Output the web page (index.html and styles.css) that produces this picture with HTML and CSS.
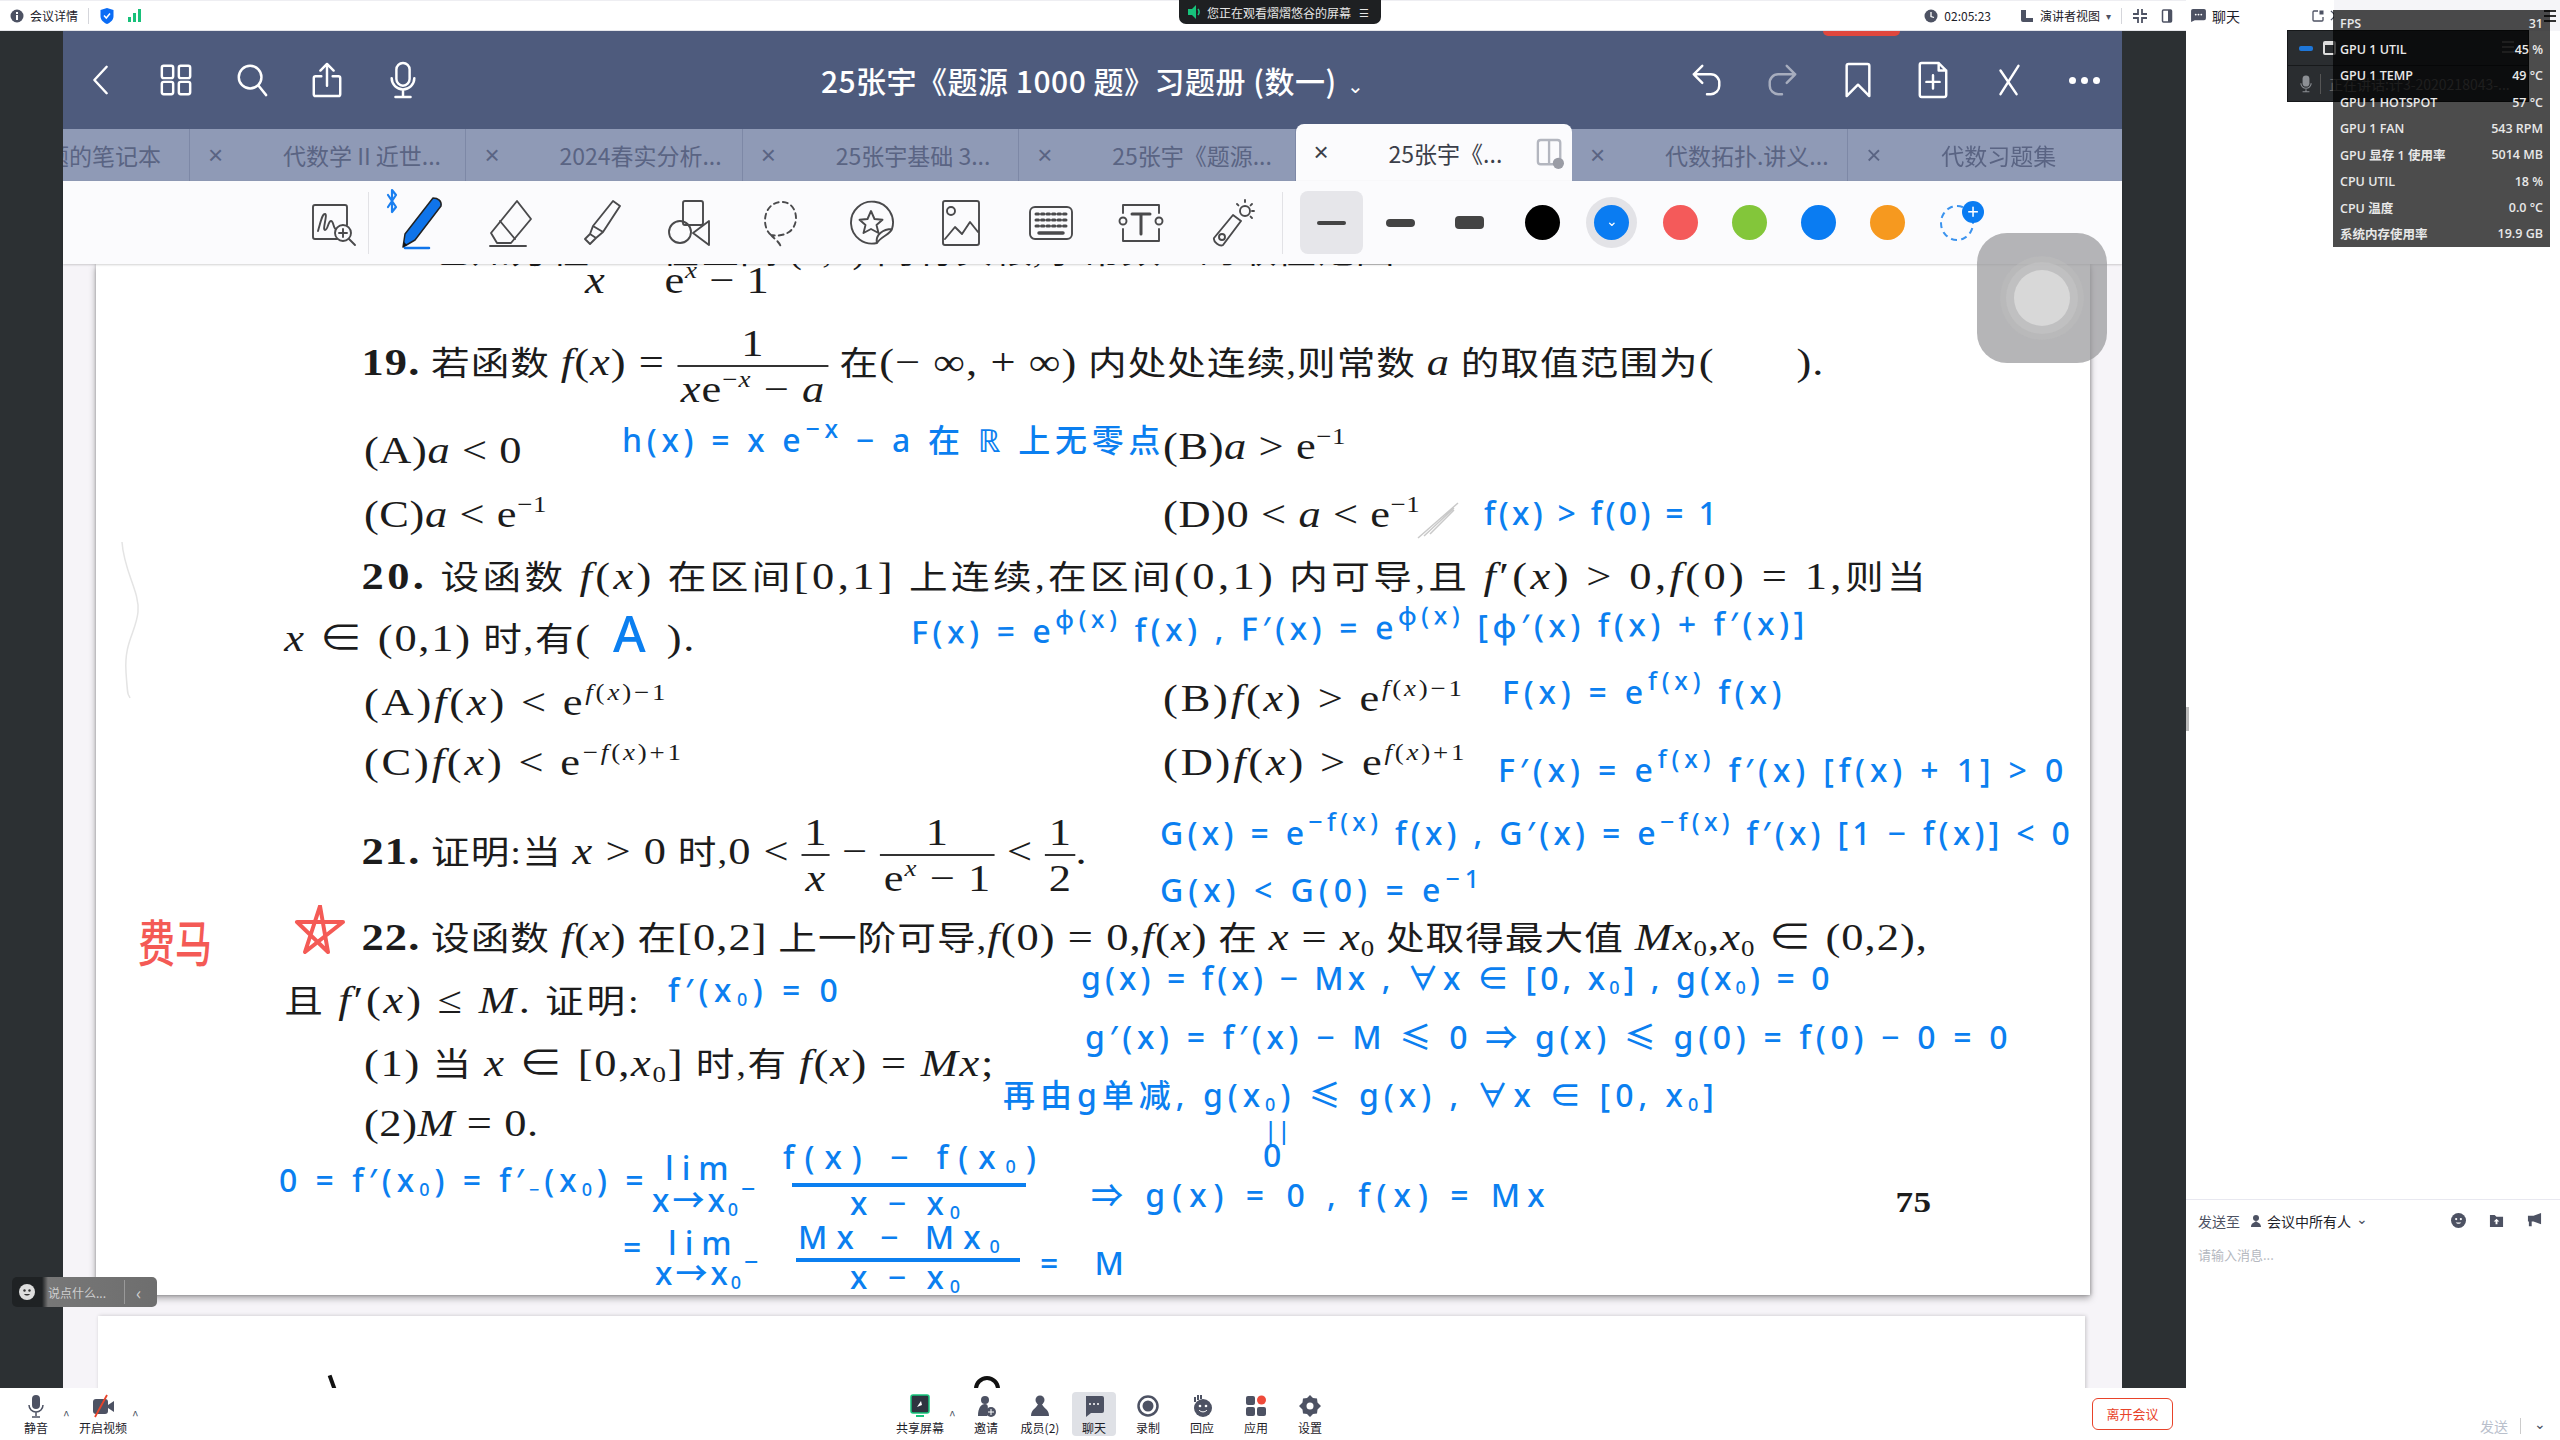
FILE: index.html
```html
<!DOCTYPE html>
<html lang="zh-CN">
<head>
    <meta charset="UTF-8">
    <title>会议详情</title>
    <link rel="stylesheet" href="styles.css">
</head>
<body>
<div class="app">
    <div class="meeting">
        <!-- meeting top strip -->
        <div class="topbar">
            <div class="topbar-group">
                <svg class="ic14" viewBox="0 0 14 14"><circle cx="7" cy="7" r="6.5" fill="#4d5263"/><rect x="6" y="6" width="2" height="5" fill="#fff"/><rect x="6" y="3" width="2" height="2" fill="#fff"/></svg>
                <span class="topbar-text">会议详情</span>
                <span class="topbar-sep"></span>
                <svg class="ic-shield" viewBox="0 0 14 16"><path d="M7 0l6.5 2v6c0 4-3 6.5-6.5 8C3.500 14.500.5 12 .5 8V2z" fill="#0a6cf5"/><path d="M4 7.500l2.300 2.500L10 5.500" stroke="#fff" stroke-width="1.500" fill="none"/></svg>
                <span class="signal"><i class="b1"></i><i class="b2"></i><i class="b3"></i></span>
            </div>
            <div class="topbar-group">
                <svg class="ic14" viewBox="0 0 14 14"><circle cx="7" cy="7" r="6.500" fill="#4d5263"/><path d="M7 3v4.500l3 1" stroke="#fff" stroke-width="1.300" fill="none"/></svg>
                <span class="topbar-text">02:05:23</span>
                <svg class="ic-layout" viewBox="0 0 14 14"><path d="M1 1h5v8h7v4H3a2 2 0 0 1-2-2z" fill="#4d5263"/></svg>
                <span class="topbar-text">演讲者视图</span>
                <span class="caret">▾</span>
                <span class="topbar-sep"></span>
                <svg class="ic14" viewBox="0 0 14 14"><path d="M5 0v5H0M9 0v5h5M5 14V9H0M9 14V9h5" stroke="#4d5263" stroke-width="1.800" fill="none"/></svg>
                <svg class="ic14" viewBox="0 0 14 14"><rect x="2.500" y="1" width="9" height="12" rx="1" fill="none" stroke="#4d5263" stroke-width="1.500"/><rect x="8" y="1" width="3.500" height="12" fill="#4d5263"/></svg>
            </div>
        </div>

        <div class="stage">
            <div class="gutter"></div>
            <div class="notes">
                <header class="nav">
                    <div class="nav-group">
                        <span class="nav-btn"><svg class="nav-ic" viewBox="0 0 36 36"><path d="M24 4L11 18l13 14"/></svg></span>
                        <span class="nav-btn"><svg class="nav-ic" viewBox="0 0 36 36"><rect x="3" y="3" width="12" height="13" rx="2"/><rect x="21" y="3" width="12" height="13" rx="2"/><rect x="3" y="20" width="12" height="13" rx="2"/><rect x="21" y="20" width="12" height="13" rx="2"/></svg></span>
                        <span class="nav-btn"><svg class="nav-ic" viewBox="0 0 36 36"><circle cx="16" cy="15" r="12"/><path d="M25 24l8 10"/></svg></span>
                        <span class="nav-btn"><svg class="nav-ic nav-tall" viewBox="0 0 36 40"><path d="M18 26V3M11 10l7-7 7 7M12 16H6a2 2 0 0 0-2 2v17a2 2 0 0 0 2 2h24a2 2 0 0 0 2-2V18a2 2 0 0 0-2-2h-6"/></svg></span>
                        <span class="nav-btn"><svg class="nav-ic nav-tall" viewBox="0 0 36 40"><rect x="11" y="2" width="14" height="24" rx="7"/><path d="M6 18a12 12 0 0 0 24 0M18 30v7M10 38h16"/></svg></span>
                    </div>
                    <div class="doc-title">25张宇《题源 1000 题》习题册 (数一)<span class="doc-caret">⌄</span></div>
                    <div class="nav-group">
                        <span class="nav-btn"><svg class="nav-ic" viewBox="0 0 36 36"><path d="M13 3L4 12l9 9M4 12h18a9 9 0 0 1 9 10v2a9 9 0 0 1-9 9h-4"/></svg></span>
                        <span class="nav-btn dim"><svg class="nav-ic" viewBox="0 0 36 36"><path d="M23 3l9 9-9 9M32 12H14a9 9 0 0 0-9 10v2a9 9 0 0 0 9 9h4"/></svg></span>
                        <span class="nav-btn"><svg class="nav-ic nav-tall" viewBox="0 0 36 40"><path d="M6 37V5a2 2 0 0 1 2-2h20a2 2 0 0 1 2 2v32L18 25z"/></svg></span>
                        <span class="nav-btn"><svg class="nav-ic nav-tall" viewBox="0 0 36 40"><path d="M24 2H6a2 2 0 0 0-2 2v32a2 2 0 0 0 2 2h24a2 2 0 0 0 2-2V10zM24 2v8h8M18 15v14M11 22h14"/></svg></span>
                        <span class="nav-btn"><svg class="nav-ic" viewBox="0 0 36 36"><path d="M28 3L9 33M9 8l17 25"/></svg></span>
                        <span class="nav-btn"><span class="dots"><i></i><i></i><i></i></span></span>
                    </div>
                </header>
                <span class="rec-tab"></span>

                <nav class="tabs">
                    <div class="tab tab-first"><span class="tab-name">题的笔记本</span></div>
                    <div class="tab"><span class="tab-x">×</span><span class="tab-name">代数学 II 近世...</span></div>
                    <div class="tab"><span class="tab-x">×</span><span class="tab-name">2024春实分析...</span></div>
                    <div class="tab"><span class="tab-x">×</span><span class="tab-name">25张宇基础 3...</span></div>
                    <div class="tab"><span class="tab-x">×</span><span class="tab-name">25张宇《题源...</span></div>
                    <div class="tab tab-active"><span class="tab-x">×</span><span class="tab-name">25张宇《...</span>
                        <svg class="split-ic" viewBox="0 0 30 34"><rect x="2" y="2" width="24" height="26" rx="3" fill="none" stroke="#b3b6bf" stroke-width="2.500"/><path d="M14 2v26" stroke="#b3b6bf" stroke-width="2.500"/><circle cx="24" cy="27" r="6" fill="#9a9ca5"/></svg>
                    </div>
                    <div class="tab"><span class="tab-x">×</span><span class="tab-name">代数拓扑.讲义...</span></div>
                    <div class="tab"><span class="tab-x">×</span><span class="tab-name">代数习题集</span></div>
                </nav>

                <div class="toolbar">
                    <span class="tool tool-zoom">
                        <svg viewBox="0 0 48 48"><path d="M38 26V8a2 2 0 0 0-2-2H6a2 2 0 0 0-2 2v30a2 2 0 0 0 2 2h22"/><path d="M9 32c3-10 4-17 7-17s-3 16 0 16 3-9 6-9 2 8 5 8"/><circle cx="34" cy="34" r="8"/><path d="M34 30v8M30 34h8M40 40l6 6"/></svg>
                    </span>
                    <span class="tool-sep first"></span>
                    <span class="tool">
                        <svg class="bt-ic" viewBox="0 0 12 26"><path d="M2 7l8 12-4 5V2l4 5-8 12" fill="none" stroke="#1a7ff0" stroke-width="2.200"/></svg>
                        <svg class="pen-ic" viewBox="0 0 48 54"><path d="M36 2c5 0 9 3 8 8L18 44 6 51l2-13z" fill="#0f74ea" stroke="#222" stroke-width="1.500"/><path d="M6 51l4-2-3-3z" fill="#111"/><path d="M8 52h24" stroke="#0f74ea" stroke-width="2.500"/></svg>
                    </span>
                    <span class="tool"><svg viewBox="0 0 48 48"><path d="M30 2l14 18-20 24H10L4 34z"/><path d="M13 22l15 18M3 47h36"/></svg></span>
                    <span class="tool"><svg viewBox="0 0 48 48"><path d="M36 2l7 5-17 26-10-6zM16 27l-3 8 6 4 7-6M13 35l-5 5 5 5 6-6"/></svg></span>
                    <span class="tool"><svg viewBox="0 0 48 48"><rect x="16" y="2" width="20" height="24" rx="2"/><circle cx="13" cy="33" r="11"/><path d="M42 22v24L26 34z"/></svg></span>
                    <span class="tool"><svg viewBox="0 0 48 48"><path d="M14 36C4 28 6 4 24 3c16-1 20 22 8 30-6 4-14 4-18 3zm0 0c2 3 8 6 10 12" stroke-dasharray="5 4"/></svg></span>
                    <span class="tool"><svg viewBox="0 0 48 48"><path d="M30 44a21 21 0 1 1 15-14c-1 5-12 8-15 14zM30 44c-2-8 6-14 15-14"/><path d="M24 12l3.500 8 8 .8-6 5.200 2 8-7.500-4-7.500 4 2-8-6-5.200 8-.8z"/></svg></span>
                    <span class="tool"><svg viewBox="0 0 48 48"><rect x="6" y="2" width="36" height="44" rx="2"/><circle cx="14" cy="12" r="4"/><path d="M8 40l10-12 7 7 8-12 8 10"/></svg></span>
                    <span class="tool"><svg viewBox="0 0 48 48"><rect x="3" y="8" width="42" height="32" rx="5"/><path d="M9 15h30M9 21h30M9 27h30" stroke-dasharray="2.500 3" stroke-width="3"/><path d="M12 34h24" stroke-width="3.500"/></svg></span>
                    <span class="tool"><svg viewBox="0 0 48 48"><path d="M6 14V6h36v8M6 30v12h36V30"/><path d="M15 15h18M24 15v20" stroke-width="3"/><circle cx="6" cy="22" r="3.500"/><circle cx="42" cy="22" r="3.500"/></svg></span>
                    <span class="tool"><svg viewBox="0 0 48 48"><path d="M26 16l8 6-18 24c-3 2-10-3-9-7z"/><circle cx="15" cy="38" r="3"/><circle cx="38" cy="12" r="5"/><path d="M38 1v3M47 12h-3M45 5l-2 2M45 19l-2-2M30 5l2 2" stroke-dasharray="2 1"/></svg></span>
                    <span class="tool-sep second"></span>
                    <span class="swatch picked"><i class="dash d1"></i></span>
                    <span class="swatch"><i class="dash d2"></i></span>
                    <span class="swatch"><i class="dash d3"></i></span>
                    <span class="swatch swatch-first"><i class="dot c-black"></i></span>
                    <span class="swatch"><i class="dot c-blue ringed">⌄</i></span>
                    <span class="swatch"><i class="dot c-red"></i></span>
                    <span class="swatch"><i class="dot c-green"></i></span>
                    <span class="swatch"><i class="dot c-blue"></i></span>
                    <span class="swatch"><i class="dot c-orange"></i></span>
                    <span class="swatch add-colour"><i class="dashed-ring"></i><i class="plus">+</i></span>
                </div>

                <div class="viewer">
                    <div class="page">
                        <div class="scan">
                            <div class="cut">
                                <span class="q-head"><b>18.</b> 已知方程</span><span class="q-tail">在区间 (0,1) 内有实根,求常数 <i>k</i> 的取值范围.</span><br>
                                <span class="cut-x m"><i>x</i></span><span class="cut-e m">e<sup><i>x</i></sup> − 1</span>
                            </div>
                            <div class="line q sp1"><b>19.</b> 若函数 <span class="m"><i>f</i>(<i>x</i>) = <span class="frac f19"><span>1</span><span><i>x</i>e<sup>−<i>x</i></sup> − <i>a</i></span></span></span> 在<span class="m">(− ∞, + ∞)</span> 内处处连续,则常数 <span class="m"><i>a</i></span> 的取值范围为<span class="m">(<span class="blank"></span>).</span></div>
                            <div class="line opts"><span class="m">(A)<i>a</i> &lt; 0</span><span class="m up">(B)<i>a</i> &gt; e<sup>−1</sup></span></div>
                            <div class="line opts"><span class="m">(C)<i>a</i> &lt; e<sup>−1</sup></span><span class="m">(D)0 &lt; <i>a</i> &lt; e<sup>−1</sup></span></div>
                            <div class="line q sp4"><b>20.</b> 设函数 <span class="m"><i>f</i>(<i>x</i>)</span> 在区间<span class="m">[0,1]</span> 上连续,在区间<span class="m">(0,1)</span> 内可导,且 <span class="m"><i>f</i>′(<i>x</i>) &gt; 0,<i>f</i>(0) = 1,</span>则当</div>
                            <div class="line cont sp2"><span class="m"><i>x</i> ∈ (0,1)</span> 时,有<span class="m">(<span class="blank wide"></span>).</span></div>
                            <div class="line opts sp3"><span class="m">(A)<i>f</i>(<i>x</i>) &lt; e<sup><i>f</i>(<i>x</i>)−1</sup></span><span class="m up">(B)<i>f</i>(<i>x</i>) &gt; e<sup><i>f</i>(<i>x</i>)−1</sup></span></div>
                            <div class="line opts sp3"><span class="m">(C)<i>f</i>(<i>x</i>) &lt; e<sup>−<i>f</i>(<i>x</i>)+1</sup></span><span class="m">(D)<i>f</i>(<i>x</i>) &gt; e<sup><i>f</i>(<i>x</i>)+1</sup></span></div>
                            <div class="line q sp1"><b>21.</b> 证明:当 <span class="m"><i>x</i> &gt; 0</span> 时,<span class="m">0 &lt; <span class="frac"><span>1</span><span><i>x</i></span></span> − <span class="frac"><span>1</span><span>e<sup><i>x</i></sup> − 1</span></span> &lt; <span class="frac"><span>1</span><span>2</span></span>.</span></div>
                            <div class="line q sp1"><b>22.</b> 设函数 <span class="m"><i>f</i>(<i>x</i>)</span> 在<span class="m">[0,2]</span> 上一阶可导,<span class="m"><i>f</i>(0) = 0,<i>f</i>(<i>x</i>)</span> 在 <span class="m"><i>x</i> = <i>x</i><sub>0</sub></span> 处取得最大值 <span class="m"><i>Mx</i><sub>0</sub>,<i>x</i><sub>0</sub> ∈ (0,2),</span></div>
                            <div class="line cont sp3">且 <span class="m"><i>f</i>′(<i>x</i>) ≤ <i>M</i>.</span> 证明:</div>
                            <div class="line opt-one sp2"><span class="m">(1)</span> 当 <span class="m"><i>x</i> ∈ [0,<i>x</i><sub>0</sub>]</span> 时,有 <span class="m"><i>f</i>(<i>x</i>) = <i>Mx</i>;</span></div>
                            <div class="line opt-one m">(2)<i>M</i> = 0.</div>
                            <div class="line page-no">75</div>
                        </div>

                        <!-- handwriting on top of the scan -->
                        <span class="ink n1">h(x) = x e<sup>−x</sup> − a 在 ℝ 上无零点</span>
                        <span class="ink n2">f(x) &gt; f(0) = 1</span>
                        <span class="ink n3">A</span>
                        <span class="ink n4">F(x) = e<sup>φ(x)</sup> f(x) , F′(x) = e<sup>φ(x)</sup> [φ′(x) f(x) + f′(x)]</span>
                        <span class="ink n5">F(x) = e<sup>f(x)</sup> f(x)</span>
                        <span class="ink n6">F′(x) = e<sup>f(x)</sup> f′(x) [f(x) + 1] &gt; 0</span>
                        <span class="ink n7">G(x) = e<sup>−f(x)</sup> f(x) , G′(x) = e<sup>−f(x)</sup> f′(x) [1 − f(x)] &lt; 0</span>
                        <span class="ink n8">G(x) &lt; G(0) = e<sup>−1</sup></span>
                        <span class="ink n9">f′(x<sub>0</sub>) = 0</span>
                        <span class="ink n10">g(x) = f(x) − Mx , ∀x ∈ [0, x<sub>0</sub>] , g(x<sub>0</sub>) = 0</span>
                        <span class="ink n11">g′(x) = f′(x) − M ≤ 0 ⇒ g(x) ≤ g(0) = f(0) − 0 = 0</span>
                        <span class="ink n12">再由g单减, g(x<sub>0</sub>) ≤ g(x) , ∀x ∈ [0, x<sub>0</sub>]</span>
                        <span class="ink n13">||</span>
                        <span class="ink n13b">0</span>
                        <span class="ink n14">0 = f′(x<sub>0</sub>) = f′<sub>−</sub>(x<sub>0</sub>) =</span>
                        <span class="ink lim1">lim</span>
                        <span class="ink arr1">x→x<sub>0</sub><sup>−</sup></span>
                        <span class="ink num1">f(x) − f(x<sub>0</sub>)</span>
                        <span class="ink-bar bar1"></span>
                        <span class="ink den1">x − x<sub>0</sub></span>
                        <span class="ink eq2">=</span>
                        <span class="ink lim2">lim</span>
                        <span class="ink arr2">x→x<sub>0</sub><sup>−</sup></span>
                        <span class="ink num2">Mx − Mx<sub>0</sub></span>
                        <span class="ink-bar bar2"></span>
                        <span class="ink den2">x − x<sub>0</sub></span>
                        <span class="ink eqm">= M</span>
                        <span class="ink n16">⇒ g(x) = 0 , f(x) = Mx</span>
                        <span class="ink ink-red">费马</span>
                        <svg class="star" viewBox="0 0 54 50"><path d="M27 1l8 46L4 17h46L12 47z"/></svg>
                        <svg class="smudge s1" viewBox="0 0 44 40"><path d="M2 38L42 3M8 36L38 8M14 34l24-24"/></svg>
                        <svg class="smudge s2" viewBox="0 0 30 160"><path d="M8 2c2 30 18 50 16 70s-14 30-12 60 2 20 4 26"/></svg>
                    </div>
                    <div class="next-page">
                        <span class="next-mark m1"></span>
                        <span class="next-mark m2"></span>
                    </div>
                </div>
            </div>
            <div class="gutter right"></div>

            <div class="floater"><i></i></div>
            <div class="say-bar">
                <svg class="say-face" viewBox="0 0 16 16"><circle cx="8" cy="8" r="8" fill="#ddd"/><circle cx="5.500" cy="6.500" r="1.200" fill="#333"/><circle cx="10.500" cy="6.500" r="1.200" fill="#333"/><path d="M5 10c1.500 2 4.500 2 6 0" fill="#333"/></svg>
                <span class="say-text">说点什么...</span>
                <span class="say-chev">‹</span>
            </div>
        </div>

        <div class="bottombar">
            <div class="bb-group">
                <span class="bb-item">
                    <svg class="bb-ic" viewBox="0 0 24 24"><rect x="8" y="1" width="8" height="14" rx="4" fill="#4d5263"/><path d="M5 11a7 7 0 0 0 14 0M12 18v4M8 23h8" stroke="#4d5263" stroke-width="1.500" fill="none"/></svg>
                    <span>静音</span>
                </span>
                <span class="bb-up">^</span>
                <span class="bb-item wide">
                    <svg class="bb-ic" viewBox="0 0 24 24"><rect x="2" y="5" width="15" height="15" rx="3" fill="#4d5263"/><path d="M17 11l6-4v11l-6-4z" fill="#4d5263"/><path d="M16 1L4 23" stroke="#e8432a" stroke-width="1.800"/></svg>
                    <span>开启视频</span>
                </span>
                <span class="bb-up">^</span>
            </div>
            <div class="bb-group centre">
                <span class="bb-item wide">
                    <svg class="bb-ic" viewBox="0 0 24 24"><rect x="3" y="1" width="18" height="18" rx="2" fill="#2f3440" stroke="#17c37b" stroke-width="1.500"/><path d="M9 13l4-6 1 4z" fill="#fff"/><rect x="8" y="21" width="8" height="2" fill="#17c37b"/></svg>
                    <span>共享屏幕</span>
                </span>
                <span class="bb-up">^</span>
                <span class="bb-item"><svg class="bb-ic" viewBox="0 0 24 24"><circle cx="11" cy="6" r="4" fill="#4d5263"/><path d="M4 22c0-8 3-12 7-12s3 4 2 12z" fill="#4d5263"/><circle cx="17" cy="18" r="5" fill="#4d5263"/><path d="M17 15v6M14 18h6" stroke="#fff"/></svg><span>邀请</span></span>
                <span class="bb-item"><svg class="bb-ic" viewBox="0 0 24 24"><circle cx="12" cy="6" r="4.500" fill="#4d5263"/><path d="M3 22c0-7 5-7 7-12h4c2 5 7 5 7 12z" fill="#4d5263"/></svg><span>成员(2)</span></span>
                <span class="bb-item on"><svg class="bb-ic" viewBox="0 0 24 24"><path d="M4 2h16a2 2 0 0 1 2 2v13a2 2 0 0 1-2 2H9l-5 4z" fill="#4d5263"/><circle cx="8" cy="10" r="1" fill="#fff"/><circle cx="12" cy="10" r="1" fill="#fff"/><circle cx="16" cy="10" r="1" fill="#fff"/></svg><span>聊天</span></span>
                <span class="bb-item"><svg class="bb-ic" viewBox="0 0 24 24"><circle cx="12" cy="12" r="9.500" fill="none" stroke="#4d5263" stroke-width="2.500"/><circle cx="12" cy="12" r="5.500" fill="#4d5263"/></svg><span>录制</span></span>
                <span class="bb-item"><svg class="bb-ic" viewBox="0 0 24 24"><circle cx="13" cy="14" r="9" fill="#4d5263"/><circle cx="10" cy="12" r="1.300" fill="#fff"/><circle cx="16" cy="12" r="1.300" fill="#fff"/><path d="M9 16c2 2.500 6 2.500 8 0" stroke="#fff" fill="none"/><path d="M5 8V3M8 6V1M11 5V1" stroke="#4d5263" stroke-width="2"/></svg><span>回应</span></span>
                <span class="bb-item"><svg class="bb-ic" viewBox="0 0 24 24"><rect x="2" y="2" width="9" height="9" rx="2" fill="#4d5263"/><rect x="2" y="13" width="9" height="9" rx="2" fill="#4d5263"/><rect x="13" y="13" width="9" height="9" rx="2" fill="#4d5263"/><circle cx="17.500" cy="6" r="4.500" fill="#ef4a3a"/></svg><span>应用</span></span>
                <span class="bb-item"><svg class="bb-ic" viewBox="0 0 24 24"><path d="M12 1l3 3 4 .5.500 4L23 12l-3.500 3.500-.5 4-4 .5-3 3-3-3-4-.5-.5-4L1 12l3.500-3.500.5-4L9 4z" fill="#4d5263"/><circle cx="12" cy="12" r="3.500" fill="#fff"/></svg><span>设置</span></span>
            </div>
            <span class="leave">离开会议</span>
        </div>
    </div>

    <aside class="chat">
        <div class="chat-head">
            <div class="chat-title">
                <svg class="ic-chat" viewBox="0 0 16 14"><path d="M2 0h12a2 2 0 0 1 2 2v8a2 2 0 0 1-2 2H4l-4 2V2a2 2 0 0 1 2-2z" fill="#4d5263"/><circle cx="5" cy="6" r="1" fill="#fff"/><circle cx="8" cy="6" r="1" fill="#fff"/><circle cx="11" cy="6" r="1" fill="#fff"/></svg>
                <span class="chat-name">聊天</span>
                <svg class="ic-pop" viewBox="0 0 12 12"><path d="M6 1H2a1 1 0 0 0-1 1v8a1 1 0 0 0 1 1h8a1 1 0 0 0 1-1V7" fill="none" stroke="#4d5263" stroke-width="1.300"/><rect x="7.500" y="0.500" width="4" height="4" fill="#4d5263"/></svg>
                <svg class="ic-close" viewBox="0 0 12 12"><path d="M1 1l10 10M11 1L1 11" stroke="#4d5263" stroke-width="1.400"/></svg>
            </div>
            <div class="chat-strip"><span class="burger"><i></i><i></i><i></i></span></div>
        </div>
        <div class="chat-list"><span class="resize-grip"></span></div>
        <div class="chat-foot">
            <div class="send-to">
                <span class="muted">发送至</span>
                <svg class="ic-person" viewBox="0 0 12 14"><circle cx="6" cy="4" r="3" fill="#4d5263"/><path d="M1 13c0-4 3-4 5-6 2 2 5 2 5 6z" fill="#4d5263"/></svg>
                <span>会议中所有人</span>
                <span class="chev-down">⌄</span>
                <span class="send-icons">
                    <svg viewBox="0 0 16 16"><circle cx="8" cy="8" r="8" fill="#4d5263"/><circle cx="5.500" cy="6.500" r="1.200" fill="#fff"/><circle cx="10.500" cy="6.500" r="1.200" fill="#fff"/><path d="M5 10c1.500 2 4.500 2 6 0" fill="#fff"/></svg>
                    <svg viewBox="0 0 16 16"><path d="M1 2h5l2 2h7v11H1z" fill="#4d5263"/><path d="M8 6l3 3H9v3H7V9H5z" fill="#fff"/></svg>
                    <svg viewBox="0 0 16 16"><path d="M15 0v12L7 9H5v5H2V9H1V3h6z" fill="#4d5263"/></svg>
                </span>
            </div>
            <div class="chat-input">请输入消息...</div>
            <div class="send-row"><span class="send">发送</span><i></i><span class="chev-down">⌄</span></div>
        </div>
    </aside>

    <div class="pill">
        <svg class="pill-ic" viewBox="0 0 12 14"><path d="M0 4h4l4-4v14l-4-4H0z" fill="#17c37b"/><path d="M10 4c1.500 2 1.500 4 0 6" stroke="#17c37b" stroke-width="1.500" fill="none"/></svg>
        <span>您正在观看熠熠悠谷的屏幕</span>
        <span class="pill-menu">☰</span>
    </div>

    <div class="voice">
        <div class="voice-row">
            <i class="v-min"></i><i class="v-max"></i><span class="burger v-burger"><i></i><i></i><i></i></span>
        </div>
        <div class="voice-row">
            <svg class="v-mic" viewBox="0 0 14 20"><rect x="3" y="0" width="8" height="13" rx="4" fill="#8c8f94"/><path d="M1 9a6 6 0 0 0 12 0M7 16v3M3 19h8" stroke="#8c8f94" stroke-width="1.300" fill="none"/></svg>
            <i class="v-sep"></i>
            <span class="v-text">正在讲话:计3-2020218043-...</span>
        </div>
    </div>

    <div class="hud">
        <div class="hud-row"><span>FPS</span><span>31</span></div>
        <div class="hud-row"><span>GPU 1 UTIL</span><span>45 %</span></div>
        <div class="hud-row"><span>GPU 1 TEMP</span><span>49 °C</span></div>
        <div class="hud-row"><span>GPU 1 HOTSPOT</span><span>57 °C</span></div>
        <div class="hud-row"><span>GPU 1 FAN</span><span>543 RPM</span></div>
        <div class="hud-row"><span>GPU 显存 1 使用率</span><span>5014 MB</span></div>
        <div class="hud-row"><span>CPU UTIL</span><span>18 %</span></div>
        <div class="hud-row"><span>CPU 温度</span><span>0.0 °C</span></div>
        <div class="hud-row"><span>系统内存使用率</span><span>19.9 GB</span></div>
    </div>
</div>
</body>
</html>
```
FILE: styles.css
```css
* {
    box-sizing: border-box;
}
body {
    margin: 0;
    background: #fff;
    font-family: "Noto Sans CJK SC", "Liberation Sans", sans-serif;
}
.app {
    position: relative;
    width: 2560px;
    height: 1440px;
    overflow: hidden;
    display: grid;
    grid-template-columns: 2186px 374px;
    grid-template-rows: 1440px;
}
.meeting {
    display: flex;
    flex-direction: column;
    min-width: 0;
    min-height: 0;
}

/* top strip */
.topbar {
    height: 31px;
    flex: none;
    display: flex;
    justify-content: space-between;
    align-items: center;
    padding: 0 12px 0 10px;
    background: #fff;
    border-top: 1px solid #eeeef2;
    border-bottom: 1px solid #e4e5ea;
}
.topbar-group {
    display: flex;
    align-items: center;
    gap: 6px;
}
.topbar-text {
    font-size: 12px;
    color: #1d2129;
}
.topbar-sep {
    width: 1px;
    height: 16px;
    margin: 0 5px 0 4px;
    background: #d5d6db;
}
.ic14 {
    width: 14px;
    height: 14px;
}
.ic14 + .ic14 {
    margin-left: 7px;
}
.ic-shield {
    width: 14px;
    height: 16px;
}
.ic-layout {
    width: 14px;
    height: 14px;
    margin-left: 23px;
}
.signal {
    display: flex;
    align-items: flex-end;
    gap: 2px;
    height: 13px;
    margin-left: 8px;
}
.signal i {
    width: 3px;
    background: #18c07a;
}
.signal .b1 { height: 5px; }
.signal .b2 { height: 9px; }
.signal .b3 { height: 13px; }
.caret {
    font-size: 10px;
    color: #4d5263;
}

/* meeting video area */
.stage {
    position: relative;
    flex: 1;
    display: flex;
    min-height: 0;
    background: #2c3033;
}
.gutter {
    width: 63px;
    flex: none;
}
.gutter.right {
    width: 64px;
}
.notes {
    position: relative;
    flex: 1;
    display: flex;
    flex-direction: column;
    min-width: 0;
    filter: blur(0.4px);
}
.nav {
    height: 98px;
    flex: none;
    display: grid;
    grid-template-columns: 1fr auto 1fr;
    align-items: center;
    background: #4e5b7d;
    color: #fff;
}
.nav-group {
    display: flex;
    align-items: center;
}
.nav-group:last-child {
    justify-content: flex-end;
}
.nav-btn {
    width: 75.5px;
    display: flex;
    justify-content: center;
}
.nav-btn.dim {
    opacity: 0.5;
}
.nav-ic {
    width: 34px;
    height: 34px;
    fill: none;
    stroke: #fff;
    stroke-width: 2.6;
    stroke-linecap: round;
    stroke-linejoin: round;
}
.nav-tall {
    height: 38px;
}
.dots {
    display: flex;
    gap: 5px;
}
.dots i {
    width: 7px;
    height: 7px;
    border-radius: 50%;
    background: #fff;
}
.doc-title {
    font-size: 30px;
    font-weight: 500;
    letter-spacing: 0.5px;
    white-space: nowrap;
}
.doc-caret {
    margin-left: 10px;
    font-size: 20px;
}
.rec-tab {
    position: absolute;
    left: 1760px;
    top: 0;
    width: 77px;
    height: 5px;
    border-radius: 0 0 6px 6px;
    background: #e0473e;
}

/* tabs */
.tabs {
    position: relative;
    height: 52px;
    flex: none;
    display: flex;
    background: #8f9ab6;
    font-size: 23px;
    color: #5a6483;
}
.tab {
    position: relative;
    width: 276.4px;
    flex: none;
    display: flex;
    align-items: center;
    border-right: 1px solid #7d88a6;
    white-space: nowrap;
}
.tab:last-child {
    border-right: 0;
}
.tab-first {
    width: 127px;
    justify-content: flex-end;
    overflow: hidden;
}
.tab-first .tab-name {
    margin: 0 28px 0 0;
}
.tab-x {
    width: 93px;
    padding-left: 18px;
    font-family: "Liberation Sans", sans-serif;
    font-size: 26px;
    font-weight: 300;
}
.tab-active {
    margin-top: -5px;
    height: 57px;
    border-right: 0;
    border-radius: 8px 8px 0 0;
    background: #fbfbfd;
    color: #3b3f4a;
}
.split-ic {
    position: absolute;
    right: 8px;
    top: 14px;
    width: 28px;
    height: 32px;
}

/* drawing tools */
.toolbar {
    height: 83px;
    flex: none;
    display: flex;
    align-items: center;
    padding-left: 240px;
    background: #fbfbfd;
    box-shadow: 0 1px 2px rgba(0, 0, 0, 0.18);
    position: relative;
    z-index: 1;
}
.tool {
    position: relative;
    width: 90px;
    height: 54px;
    flex: none;
    display: flex;
    justify-content: center;
    align-items: center;
}
.tool-zoom {
    width: 60px;
}
.tool svg {
    width: 48px;
    height: 48px;
    fill: none;
    stroke: #4a4a4c;
    stroke-width: 1.9;
    stroke-linejoin: round;
    stroke-linecap: round;
}
.tool .bt-ic {
    position: absolute;
    left: 10px;
    top: -8px;
    width: 12px;
    height: 26px;
}
.tool .pen-ic {
    height: 54px;
    stroke: none;
}
.tool-sep {
    width: 1px;
    height: 62px;
    flex: none;
    background: #e2e2e6;
}
.tool-sep.first {
    margin: 0 7px 0 5px;
}
.tool-sep.second {
    margin: 0 14px 0 6px;
}
.swatch {
    position: relative;
    width: 69px;
    height: 63px;
    flex: none;
    display: flex;
    justify-content: center;
    align-items: center;
}
.swatch-first {
    margin-left: 4px;
}
.swatch.picked::before {
    content: "";
    position: absolute;
    left: 3px;
    right: 3px;
    top: 0;
    bottom: 0;
    border-radius: 8px;
    background: #e6e6ea;
}
.dash {
    position: relative;
    width: 29px;
    background: #444;
    border-radius: 4px;
}
.d1 { height: 4px; }
.d2 { height: 8px; }
.d3 { height: 13px; }
.dot {
    width: 35px;
    height: 35px;
    border-radius: 50%;
    display: flex;
    align-items: center;
    justify-content: center;
    font-style: normal;
    color: #fff;
    font-size: 14px;
    line-height: 1;
}
.c-black { background: #000; }
.c-blue { background: #0a7cf2; }
.c-red { background: #f45a5a; }
.c-green { background: #83c63a; }
.c-orange { background: #f6991f; }
.ringed {
    box-shadow: 0 0 0 8px #e3e3e7;
    padding-bottom: 6px;
}
.dashed-ring {
    width: 34px;
    height: 36px;
    border-radius: 50%;
    border: 2px dashed #3b93ee;
}
.plus {
    position: absolute;
    left: 40px;
    top: 10px;
    width: 22px;
    height: 22px;
    border-radius: 50%;
    background: #0a7cf2;
    color: #fff;
    font-style: normal;
    font-size: 20px;
    line-height: 20px;
    text-align: center;
}

/* pdf pages */
.viewer {
    position: relative;
    flex: 1;
    min-height: 0;
    overflow: hidden;
    background: #f6f4f8;
    padding: 0 32px 0 33px;
}
.page {
    position: relative;
    height: 1031px;
    overflow: hidden;
    background: #fff;
    box-shadow: 0 3px 7px rgba(0, 0, 0, 0.35), 1px 0 3px rgba(0, 0, 0, 0.2), -1px 0 2px rgba(0, 0, 0, 0.08);
}
.next-page {
    position: relative;
    height: 200px;
    margin: 21px 5px 0 2px;
    background: #fff;
    box-shadow: 1px 0 4px rgba(0, 0, 0, 0.2);
}
.next-mark {
    position: absolute;
    background: #111;
}
.next-mark.m1 {
    left: 232px;
    top: 59px;
    width: 4px;
    height: 14px;
    transform: rotate(-20deg);
}
.next-mark.m2 {
    left: 876px;
    top: 60px;
    width: 26px;
    height: 26px;
    border-radius: 50%;
    background: none;
    border: 4px solid #111;
}

/* the scan is wider than tall on the shared screen */
.scan {
    width: 1704px;
    transform: scaleX(1.17);
    transform-origin: 0 0;
    display: grid;
    grid-template-rows: 67px 62px 88px 64px 62px 62px 64px 60px 89px 86px 63px 63px 60px 79px;
    color: #1c1c1c;
    font-family: "Liberation Serif", "Noto Sans CJK SC", serif;
    font-size: 33px;
    letter-spacing: 0.5px;
}
.m {
    font-size: 38px;
}
.scan b {
    font-size: 38px;
}
.sp1 { letter-spacing: 0.9px; }
.sp2 { letter-spacing: 1.5px; }
.sp3 { letter-spacing: 2.4px; }
.sp4 { letter-spacing: 2.9px; }
.line {
    height: 62px;
    line-height: 62px;
    align-self: end;
    white-space: nowrap;
}
.scan sup {
    font-size: 23px;
    line-height: 0;
    vertical-align: 15px;
}
.scan sub {
    font-size: 23px;
    line-height: 0;
    vertical-align: -6px;
}
.q {
    padding-left: 227px;
}
.cont {
    padding-left: 161px;
}
.opt-one {
    padding-left: 229px;
}
.opts {
    padding-left: 229px;
    display: grid;
    grid-template-columns: 683px 1fr;
}
.up {
    transform: translateY(-4px);
}
.blank {
    display: inline-block;
    width: 70px;
}
.blank.wide {
    width: 64px;
}
.frac {
    display: inline-flex;
    flex-direction: column;
    align-items: center;
    vertical-align: middle;
    line-height: 44px;
    margin: -20px 0;
}
.frac > span:first-child {
    align-self: stretch;
    text-align: center;
    border-bottom: 2px solid #333;
}
.frac > span + span {
    padding: 0 3px;
}
.cut {
    margin-top: -28px;
    line-height: 28px;
    white-space: nowrap;
    padding-left: 230px;
}
.q-head {
    display: inline-block;
    width: 253px;
}
.q-tail {
    display: inline-block;
}
.cut-x {
    display: inline-block;
    margin-left: 188px;
    width: 68px;
}
.page-no {
    padding-left: 1538px;
    font-size: 30px;
    font-weight: bold;
}

/* handwriting */
.ink {
    position: absolute;
    line-height: 40px;
    white-space: pre;
    font-family: "Noto Sans", "Noto Sans CJK SC", sans-serif;
    font-size: 32px;
    font-weight: 500;
    color: #0b7ff0;
}
.ink sup {
    font-size: 25px;
    line-height: 0;
    vertical-align: 14px;
}
.ink sub {
    font-size: 18px;
    line-height: 0;
    vertical-align: -4px;
}
.ink-bar {
    position: absolute;
    height: 4px;
    background: #0b7ff0;
}
.n1 { left: 526px; top: 156px; letter-spacing: 4.7px; }
.n2 { left: 1388px; top: 229px; letter-spacing: 3.3px; }
.n3 { left: 517px; top: 349px; font-size: 50px; }
.n4 { left: 815px; top: 348px; letter-spacing: 4.6px; transform: rotate(-0.6deg); transform-origin: 0 50%; }
.n5 { left: 1406px; top: 408px; letter-spacing: 4.8px; }
.n6 { left: 1402px; top: 486px; letter-spacing: 4.9px; }
.n7 { left: 1064px; top: 549px; letter-spacing: 4.3px; }
.n8 { left: 1064px; top: 606px; letter-spacing: 5px; }
.n9 { left: 572px; top: 706px; letter-spacing: 5.5px; }
.n10 { left: 985px; top: 694px; letter-spacing: 4.1px; }
.n11 { left: 989px; top: 753px; letter-spacing: 4.7px; }
.n12 { left: 907px; top: 811px; letter-spacing: 5px; }
.n13 { left: 1168px; top: 846px; font-size: 24px; }
.n13b { left: 1167px; top: 871px; }
.n14 { left: 183px; top: 896px; letter-spacing: 5px; }
.lim1 { left: 569px; top: 884px; letter-spacing: 8px; }
.arr1 { left: 556px; top: 916px; letter-spacing: 3px; }
.num1 { left: 687px; top: 873px; letter-spacing: 10px; }
.bar1 { left: 696px; top: 919px; width: 234px; }
.den1 { left: 754px; top: 919px; letter-spacing: 6px; }
.eq2 { left: 527px; top: 963px; }
.lim2 { left: 572px; top: 959px; letter-spacing: 8px; }
.arr2 { left: 559px; top: 989px; letter-spacing: 3px; }
.num2 { left: 702px; top: 953px; letter-spacing: 9px; }
.bar2 { left: 700px; top: 994px; width: 224px; }
.den2 { left: 754px; top: 993px; letter-spacing: 6px; }
.eqm { left: 944px; top: 979px; letter-spacing: 14px; }
.n16 { left: 995px; top: 911px; letter-spacing: 7px; }
.ink-red {
    left: 42px;
    top: 659px;
    font-size: 37px;
    color: #f45a55;
    transform: scaleY(1.35);
}
.star {
    position: absolute;
    left: 197px;
    top: 641px;
    width: 54px;
    height: 50px;
    fill: none;
    stroke: #f45a55;
    stroke-width: 4;
    stroke-linejoin: round;
}
.smudge {
    position: absolute;
    fill: none;
    stroke: #c9c9c9;
    stroke-width: 1.5;
}
.smudge.s1 {
    left: 1320px;
    top: 236px;
    width: 44px;
    height: 40px;
}
.smudge.s2 {
    left: 18px;
    top: 276px;
    width: 30px;
    height: 160px;
    stroke: #e4e4e4;
}

/* things that float over the shared screen */
.floater {
    position: absolute;
    left: 1977px;
    top: 202px;
    width: 130px;
    height: 130px;
    border-radius: 30px;
    background: rgba(150, 150, 152, 0.7);
    display: flex;
    align-items: center;
    justify-content: center;
}
.floater i {
    width: 56px;
    height: 56px;
    border-radius: 50%;
    background: #d8d8d8;
    box-shadow: 0 0 0 8px rgba(200, 200, 200, 0.5), 0 0 0 14px rgba(190, 190, 190, 0.4);
}
.say-bar {
    position: absolute;
    left: 12px;
    top: 1246px;
    width: 145px;
    height: 30px;
    display: flex;
    align-items: center;
    border-radius: 5px;
    background: linear-gradient(90deg, #1f2224 0, #1f2224 30px, #777 36px, #6e6e6e 100%);
    color: #cfcfcf;
    font-size: 12px;
}
.say-face {
    width: 16px;
    height: 16px;
    margin: 0 13px 0 7px;
}
.say-text {
    width: 76px;
    white-space: nowrap;
}
.say-chev {
    border-left: 1px solid #999;
    padding-left: 11px;
    font-size: 18px;
    line-height: 24px;
}

/* bottom toolbar */
.bottombar {
    height: 52px;
    flex: none;
    display: flex;
    align-items: center;
    background: #fff;
    padding: 0 13px 0 9px;
    position: relative;
    z-index: 2;
}
.bb-group {
    display: flex;
    align-items: center;
}
.bb-group.centre {
    position: absolute;
    left: 888px;
    top: 0;
    height: 52px;
}
.bb-item {
    width: 44px;
    height: 44px;
    margin: 0 5px;
    flex: none;
    display: flex;
    flex-direction: column;
    align-items: center;
    justify-content: space-between;
    border-radius: 4px;
    font-size: 12px;
    line-height: 16px;
    color: #1d2129;
    white-space: nowrap;
}
.bb-item.wide {
    width: 48px;
    margin: 0 5px 0 6px;
}
.bb-group.centre .bb-item.wide {
    margin-left: 8px;
}
.bb-item.on {
    background: #dfe1e6;
}
.bb-ic {
    width: 24px;
    height: 24px;
    margin-top: 2px;
}
.bb-up {
    width: 10px;
    font-size: 12px;
    color: #4d5263;
}
.leave {
    margin-left: auto;
    width: 81px;
    height: 32px;
    line-height: 30px;
    text-align: center;
    border: 1px solid #e8432a;
    border-radius: 6px;
    font-size: 13px;
    color: #e8432a;
}

/* chat side panel */
.chat {
    position: relative;
    display: flex;
    flex-direction: column;
    min-height: 0;
    background: #fff;
    color: #1d2129;
    font-size: 14px;
}
.chat-head {
    height: 31px;
    flex: none;
    display: flex;
}
.chat-title {
    width: 148px;
    flex: none;
    display: flex;
    align-items: center;
    padding-left: 5px;
    gap: 6px;
    white-space: nowrap;
}
.chat-name {
    width: 28px;
    flex: none;
}
.ic-chat {
    width: 15px;
    height: 13px;
    flex: none;
}
.ic-pop {
    width: 12px;
    height: 12px;
    margin-left: 66px;
    flex: none;
}
.ic-close {
    width: 11px;
    height: 11px;
    flex: none;
}
.chat-strip {
    flex: 1;
    display: flex;
    justify-content: flex-end;
    align-items: center;
    padding-right: 4px;
    background: #f5f5f8;
}
.burger {
    display: flex;
    flex-direction: column;
    gap: 3px;
    width: 12px;
}
.burger i {
    height: 2px;
    background: #333;
}
.chat-list {
    position: relative;
    flex: 1;
    border-bottom: 1px solid #e8e8f0;
}
.resize-grip {
    position: absolute;
    left: 0;
    top: 676px;
    width: 3px;
    height: 24px;
    background: #bbb;
}
.chat-foot {
    height: 240px;
    flex: none;
    position: relative;
    padding: 0 12px;
}
.send-to {
    height: 41px;
    display: flex;
    align-items: center;
    font-size: 14px;
    white-space: nowrap;
}
.muted {
    color: #4d5263;
}
.ic-person {
    width: 12px;
    height: 14px;
    margin: 0 5px 0 10px;
}
.chev-down {
    margin: -6px 0 0 5px;
    color: #4d5263;
    font-size: 14px;
}
.send-icons {
    display: flex;
    gap: 23px;
    margin-left: 83px;
}
.send-icons svg {
    width: 15px;
    height: 15px;
}
.chat-input {
    margin-top: 4px;
    font-size: 13px;
    color: #b5b8c0;
}
.send-row {
    position: absolute;
    right: 14px;
    bottom: 4px;
    display: flex;
    align-items: center;
    color: #b9c0cc;
    font-size: 14px;
}
.send-row i {
    width: 1px;
    height: 16px;
    margin: 0 8px 0 12px;
    background: #ccc;
}

/* screen-share pill */
.pill {
    position: absolute;
    left: 1179px;
    top: 0;
    width: 202px;
    height: 24px;
    display: flex;
    align-items: center;
    padding-left: 9px;
    gap: 7px;
    border-radius: 0 0 7px 7px;
    background: #1e2022;
    color: #e6e6e6;
    font-size: 12px;
    white-space: nowrap;
}
.pill-ic {
    width: 12px;
    height: 14px;
}
.pill-menu {
    margin-left: 1px;
    font-size: 11px;
}

/* voice window and hardware overlay */
.voice {
    position: absolute;
    left: 2287px;
    top: 30px;
    width: 242px;
    height: 72px;
    background: #2a2d30;
    border: 1px solid #16181a;
}
.voice-row {
    position: relative;
    height: 35px;
    display: flex;
    align-items: center;
}
.voice-row:first-child {
    border-bottom: 1px solid #17191b;
}
.v-min {
    width: 14px;
    height: 5px;
    margin-left: 11px;
    border-radius: 2px;
    background: #1e76d8;
}
.v-max {
    width: 13px;
    height: 14px;
    margin-left: 10px;
    border: 2px solid #ddd;
    border-top-width: 4px;
    border-radius: 2px;
}
.v-burger {
    position: absolute;
    right: 14px;
    top: 10px;
}
.v-burger i {
    background: #666;
}
.v-mic {
    width: 12px;
    height: 18px;
    margin-left: 12px;
}
.v-sep {
    width: 1px;
    height: 20px;
    margin: 0 8px;
    background: #555;
}
.v-text {
    font-size: 14px;
    color: #666;
    white-space: nowrap;
}
.hud {
    position: absolute;
    left: 2333px;
    top: 10px;
    width: 217px;
    height: 237px;
    background: rgba(0, 0, 0, 0.7);
    font-family: "Open Sans", "Noto Sans CJK SC", sans-serif;
    font-size: 12.5px;
    font-weight: 600;
    color: #e8e8e8;
}
.hud-row {
    height: 26.35px;
    display: flex;
    justify-content: space-between;
    align-items: center;
    padding: 0 7px;
    white-space: nowrap;
}
```
